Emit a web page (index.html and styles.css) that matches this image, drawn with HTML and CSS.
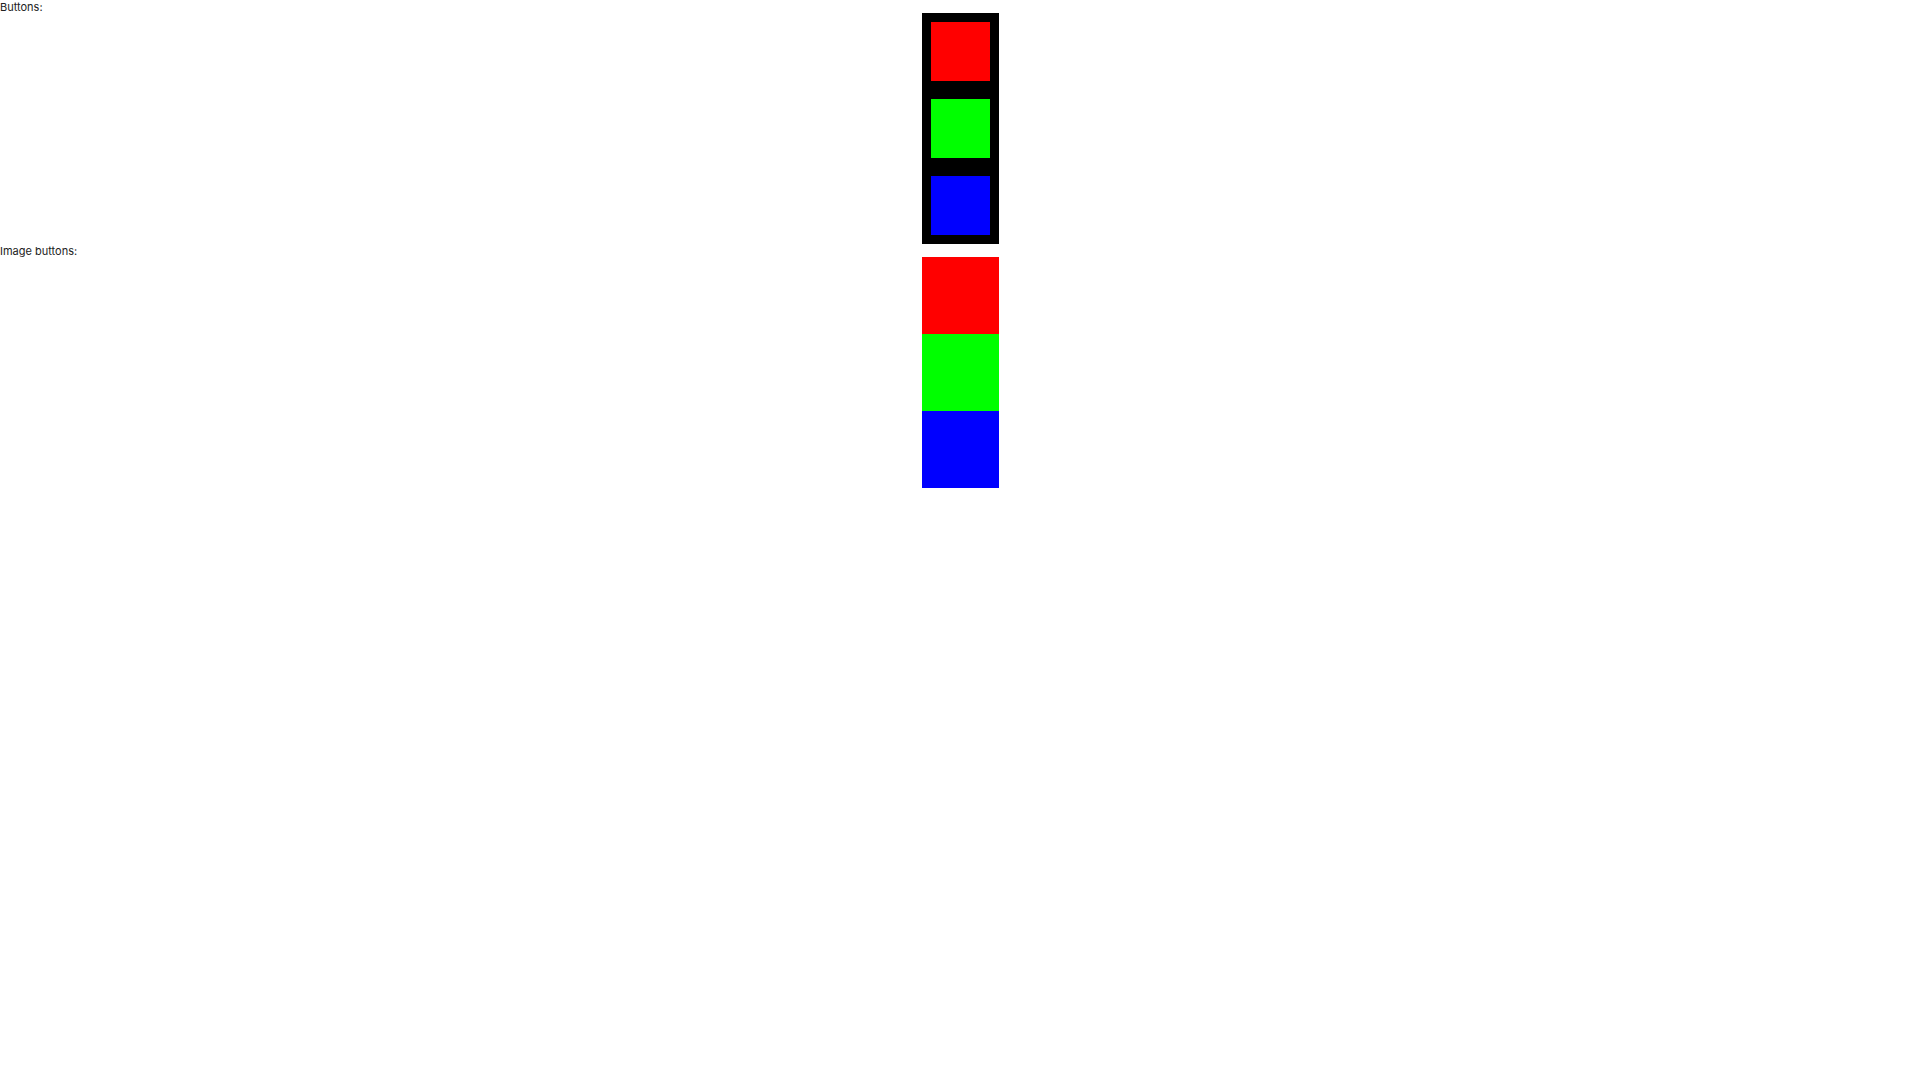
FILE: index.html
```html
<!DOCTYPE html>
<html>
<head>
  <title>Buttons</title>
  <meta charset="UTF-8">
  <link rel="stylesheet" href="styles.css">
</head>
<body>
  <div class="label">Buttons:</div>
  <div class="button-column">
    <button class="color-button red"></button>
    <button class="color-button green"></button>
    <button class="color-button blue"></button>
  </div>

  <div class="label">Image buttons:</div>
  <div class="image-column">
    <div class="image-button red"></div>
    <div class="image-button green"></div>
    <div class="image-button blue"></div>
  </div>
</body>
</html>
```
FILE: styles.css
```css
body {
  margin: 0;
  background-color: #fff;
  font-family: Inter, "Liberation Sans", sans-serif;
  font-size: 11px;
  color: #222;
}

.label {
  height: 13px;
  line-height: 15px;
  overflow: visible;
}

/* Black column with padded buttons */
.button-column {
  display: flex;
  flex-direction: column;
  gap: 18px;
  width: 59px;
  padding: 9px;
  margin: 0 auto;
  background-color: #000;
}

.color-button {
  display: block;
  width: 59px;
  height: 59px;
  padding: 0;
  border: none;
  cursor: pointer;
}

/* Image buttons fill the whole cell */
.image-column {
  display: flex;
  flex-direction: column;
  width: 77px;
  margin: 0 auto;
}

.image-button {
  width: 77px;
  height: 77px;
}

.red {
  background-color: #ff0000;
}

.green {
  background-color: #00ff00;
}

.blue {
  background-color: #0000ff;
}
```
